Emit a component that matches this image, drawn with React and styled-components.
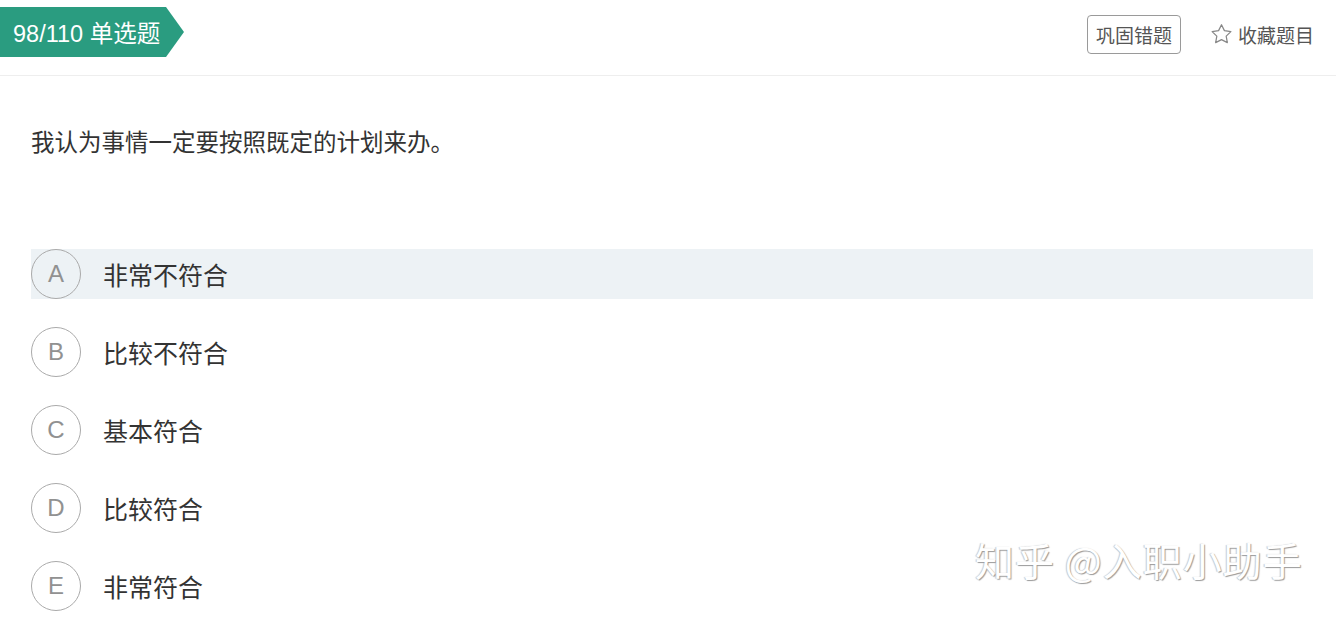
import React from "react";
import styled, { createGlobalStyle } from "styled-components";

const GlobalStyle = createGlobalStyle`
  html, body {
    margin: 0;
    padding: 0;
    background: #ffffff;
    font-family: "Liberation Sans", Arial, "Noto Sans CJK SC", sans-serif;
  }
`;

const options = [
  { key: "A", text: "非常不符合", active: true },
  { key: "B", text: "比较不符合" },
  { key: "C", text: "基本符合" },
  { key: "D", text: "比较符合" },
  { key: "E", text: "非常符合" },
];

const Page = styled.div`
  position: relative;
  width: 1336px;
  height: 618px;
  overflow: hidden;
  background: #fff;
`;

const Header = styled.div`
  display: flex;
  align-items: flex-start;
  justify-content: space-between;
  height: 76px;
  border-bottom: 1px solid #eeeeee;
  padding-right: 22px;
  box-sizing: border-box;
`;

const Tag = styled.div`
  display: flex;
  align-items: center;
  margin-top: 7px;
  height: 50px;
  width: 184px;
  box-sizing: border-box;
  padding-left: 13px;
  background: #2a9c80;
  color: #fff;
  font-size: 23.5px;
  clip-path: polygon(0 0, 166px 0, 184px 50%, 166px 100%, 0 100%);
`;

const Actions = styled.div`
  display: flex;
  align-items: center;
  gap: 28px;
  margin-top: 15px;
`;

const OutlineButton = styled.div`
  display: flex;
  align-items: center;
  justify-content: center;
  height: 39px;
  width: 94px;
  box-sizing: border-box;
  border: 1px solid #9a9a9a;
  border-radius: 4px;
  color: #555;
  font-size: 19px;
`;

const Favorite = styled.div`
  display: flex;
  align-items: center;
  gap: 4px;
  color: #555;
  font-size: 19px;
`;

const Question = styled.div`
  padding: 53px 0 0 31px;
  font-size: 23.5px;
  color: #333;
  line-height: 28px;
`;

const OptionList = styled.div`
  display: flex;
  flex-direction: column;
  gap: 28px;
  margin: 92px 23px 0 31px;
`;

const OptionRow = styled.div`
  display: flex;
  align-items: center;
  height: 50px;
  background: ${(p) => (p.$active ? "#edf2f5" : "transparent")};
`;

const Letter = styled.div`
  display: flex;
  align-items: center;
  justify-content: center;
  width: 50px;
  height: 50px;
  box-sizing: border-box;
  border: 1px solid #aaaaaa;
  border-radius: 50%;
  color: #919191;
  font-size: 24px;
`;

const OptionText = styled.div`
  margin-left: 22px;
  font-size: 25px;
  color: #333;
`;

const Watermark = styled.div`
  position: absolute;
  left: 975px;
  top: 531px;
  font-size: 39px;
  color: #ffffff;
  letter-spacing: 1px;
  text-shadow: 1px 1px 1px #9a9a9a, -1px 0 1px #c8c8c8;
  font-family: "Noto Sans CJK SC", sans-serif;
`;

const StarIcon = () => (
  <svg width="25" height="25" viewBox="0 0 24 24" fill="none" stroke="#888" strokeWidth="1.2" strokeLinejoin="round">
    <path d="M12 2.6l2.8 5.7 6.2.9-4.5 4.4 1.1 6.2L12 16.9l-5.6 2.9 1.1-6.2L3 9.2l6.2-.9z" />
  </svg>
);

export default function App() {
  return (
    <Page>
      <GlobalStyle />
      <Header>
        <Tag>98/110 单选题</Tag>
        <Actions>
          <OutlineButton>巩固错题</OutlineButton>
          <Favorite>
            <StarIcon />
            收藏题目
          </Favorite>
        </Actions>
      </Header>
      <Question>我认为事情一定要按照既定的计划来办。</Question>
      <OptionList>
        {options.map((o) => (
          <OptionRow key={o.key} $active={o.active}>
            <Letter>{o.key}</Letter>
            <OptionText>{o.text}</OptionText>
          </OptionRow>
        ))}
      </OptionList>
      <Watermark>知乎 @入职小助手</Watermark>
    </Page>
  );
}
